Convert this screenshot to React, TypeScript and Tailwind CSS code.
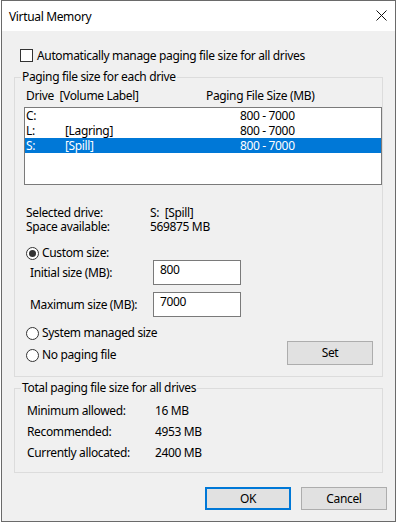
import React from "react";

const font = "font-['Noto_Sans','Open_Sans',sans-serif] tracking-[-0.35px]";

function Radio({ checked, label }: { checked?: boolean; label: string }) {
  return (
    <div className="flex items-center h-[16px] ml-[11px]">
      <div className="w-[13px] h-[13px] rounded-full border border-[#333333] bg-white flex items-center justify-center">
        {checked && <div className="w-[7px] h-[7px] rounded-full bg-[#333333]" />}
      </div>
      <span className="ml-[3px] leading-[16px]">{label}</span>
    </div>
  );
}

export default function App() {
  const rows = [
    { d: "C:", l: "", s: "800 - 7000", sel: false },
    { d: "L:", l: "[Lagring]", s: "800 - 7000", sel: false },
    { d: "S:", l: "[Spill]", s: "800 - 7000", sel: true },
  ];
  return (
    <div className={`w-[398px] h-[524px] bg-white text-[12px] text-black ${font}`}>
      <div className="ml-[1px] w-[395px] h-[522px] border border-[#6a6a6a] flex flex-col">
        <div className="h-[30px] bg-white flex items-center justify-between pl-[7px] pr-[8px]">
          <span className="leading-[16px] mt-[1px]">Virtual Memory</span>
          <svg width="11" height="11" viewBox="0 0 11 11" className="mt-[-2px]">
            <path d="M0.5 0.5 L10.5 10.5 M10.5 0.5 L0.5 10.5" stroke="#111" strokeWidth="1" />
          </svg>
        </div>
        <div className="flex-1 bg-[#f0f0f0] flex flex-col">
          <div className="flex items-center mt-[18px] ml-[18px] h-[13px]">
            <div className="w-[13px] h-[13px] border border-[#333333] bg-white" />
            <span className="ml-[4px] leading-[16px]">Automatically manage paging file size for all drives</span>
          </div>

          <fieldset className="mt-[7px] ml-[12px] w-[369px] border border-[#dcdcdc] pb-[13px]">
            <legend className="ml-[6px] px-[1px] leading-[16px]">Paging file size for each drive</legend>
            <div className="flex mt-[3px] ml-[11px] leading-[16px]">
              <span className="w-[180px]">Drive&nbsp; [Volume Label]</span>
              <span>Paging File Size (MB)</span>
            </div>
            <div className="mt-[3px] ml-[9px] w-[358px] h-[78px] border border-[#7a7a7a] bg-white">
              {rows.map((r) => (
                <div
                  key={r.d}
                  className={`flex h-[15px] leading-[15px] ${r.sel ? "bg-[#0078d7] text-white" : ""}`}
                >
                  <span className="pl-[1px] w-[40px]">{r.d}</span>
                  <span className="w-[175px]">{r.l}</span>
                  <span>{r.s}</span>
                </div>
              ))}
            </div>
            <div className="mt-[21px] ml-[11px] flex h-[14px] leading-[14px]">
              <span className="w-[124px]">Selected drive:</span>
              <span>S:&nbsp; [Spill]</span>
            </div>
            <div className="ml-[11px] flex h-[14px] leading-[14px]">
              <span className="w-[124px]">Space available:</span>
              <span>569875 MB</span>
            </div>
            <div className="mt-[11px]">
              <Radio checked label="Custom size:" />
            </div>
            <div className="mt-[-1px] ml-[15px] flex items-center">
              <span className="w-[123px]">Initial size (MB):</span>
              <div className="w-[88px] h-[25px] border border-[#7a7a7a] bg-white pl-[6px] leading-[18px]">800</div>
            </div>
            <div className="mt-[7px] ml-[15px] flex items-center">
              <span className="w-[123px]">Maximum size (MB):</span>
              <div className="w-[88px] h-[25px] border border-[#7a7a7a] bg-white pl-[6px] leading-[18px]">7000</div>
            </div>
            <div className="mt-[8px] flex items-end justify-between pr-[9px]">
              <div className="flex flex-col gap-[6px]">
                <Radio label="System managed size" />
                <Radio label="No paging file" />
              </div>
              <button className="w-[86px] h-[24px] border border-[#adadad] bg-[#e1e1e1] mb-[-2px]">Set</button>
            </div>
          </fieldset>

          <fieldset className="mt-[3px] ml-[12px] w-[369px] border border-[#dcdcdc] pb-[11px]">
            <legend className="ml-[6px] px-[1px] leading-[16px]">Total paging file size for all drives</legend>
            {[
              ["Minimum allowed:", "16 MB"],
              ["Recommended:", "4953 MB"],
              ["Currently allocated:", "2400 MB"],
            ].map(([a, b], i) => (
              <div key={a} className={`flex ml-[12px] leading-[16px] ${i === 0 ? "mt-[7px]" : "mt-[5px]"}`}>
                <span className="w-[128px]">{a}</span>
                <span>{b}</span>
              </div>
            ))}
          </fieldset>

          <div className="mt-[14px] flex justify-end gap-[10px] pr-[8px]">
            <button className="w-[86px] h-[23px] border-2 border-[#0078d7] bg-[#e1e1e1]">OK</button>
            <button className="w-[86px] h-[23px] border border-[#adadad] bg-[#e1e1e1]">Cancel</button>
          </div>
        </div>
      </div>
    </div>
  );
}
